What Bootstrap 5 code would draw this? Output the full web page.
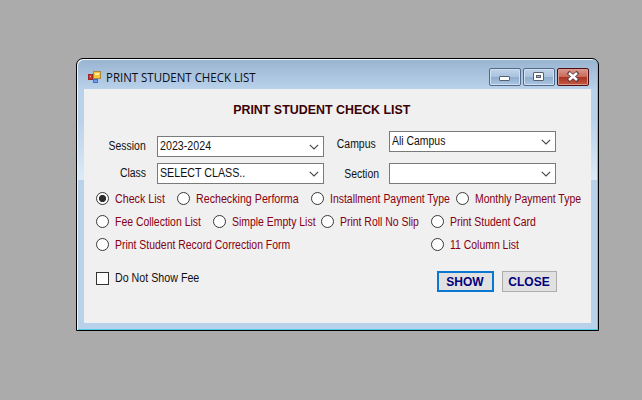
<!DOCTYPE html>
<html lang="en">
<head>
<meta charset="utf-8">
<title>PRINT STUDENT CHECK LIST</title>
<link href="https://cdn.jsdelivr.net/npm/bootstrap@5.3.0/dist/css/bootstrap.min.css" rel="stylesheet">
<style>
body{background:#ababab;font:12px/14px "Liberation Sans",Arial,sans-serif;color:#101010;height:400px;overflow:hidden}
.win{width:523px;height:273px;margin:58px 0 0 76px;border:1px solid #000;border-radius:7px 7px 0 0;
 background:linear-gradient(#99b4d1,#b9d1ea 30px,#b9d1ea 60px,#dcebf7 121px,#b9d1ea 121px);box-shadow:inset 1px 1px 0 #eef5fb,inset -1px -1px 0 #4fcfe4;padding:0 7px 7px}
.titlebar{height:30px;font-family:"Open Sans","Noto Sans",sans-serif;color:#0b0b14;padding:5px 2px 0 4px}
.sq{display:inline-block;white-space:nowrap;transform:scaleX(.87);transform-origin:0 50%}
.sq-r{transform-origin:100% 50%}
.sq-wide{transform:scaleX(.89)}
.sq-title{transform:scaleX(.955);margin:2px 0 0 4px}
.sq-head{transform:scaleX(.955);transform-origin:50% 50%}
.client{background:#f0f0f0;height:234px;padding:13px 0 0 12px}
.heading{font-size:13px;font-weight:700;color:#3a0004;line-height:15px;margin-left:-12px;padding-right:31px}
.caps{gap:2px}
.cap-btn{width:32px;height:18px;border:1px solid #52698a;border-radius:2px;background:linear-gradient(#c0d4ea,#aac3de 48%,#8eacce 50%,#a9c5e2);box-shadow:inset 0 0 0 1px #d0e0f0}
.cap-close{border-color:#4b1013;background:linear-gradient(#d99a8e,#c9695a 48%,#a93222 50%,#c45a40);box-shadow:inset 0 0 0 1px #dc9a90}
.fields{display:grid;grid-template-columns:61px 167px 65px 167px;margin-top:14px}
.names{padding-right:11px}
.name-campus{margin:6px 13px 0 0}
.name-section{margin:auto 10px 3px 0}
.pick{height:21px;border:1px solid #7a7a7a;background:#fff;padding:0 4px 0 1.5px}
.pick-up{padding-bottom:2px}
.pick svg{margin-top:2px}
.drop-a{margin-top:5px}
.drop-b{margin-top:6px}
.opts{display:grid;height:23px;color:#850010;align-items:center}
.opts-1{grid-template-columns:81px 134px 145px auto;margin-top:3px}
.opts-2{grid-template-columns:117px 108px 110px auto}
.opts-3{grid-template-columns:335px auto}
.opt{gap:5.5px}
.dot{width:13px;height:13px;border:1px solid #383838;border-radius:50%;background:#fff;flex:none}
.dot-on{background:radial-gradient(circle,#2c2c2c 3.2px,#fff 4px)}
.tick{width:13px;height:13px;border:1px solid #333;background:#fff;flex:none}
.foot{margin-top:15px;padding-right:34px}
.foot .opt{height:14px}
.act{height:21px;font-size:12px;font-weight:700;color:#00007c;background:#e1e1e1;border:1px solid #adadad;border-radius:0;padding:0;line-height:20px}
.act-show{width:57px;border:2px solid #0a78d0;line-height:18px;padding-right:1px}
.act-close{width:55px;padding-right:1px}
</style>
</head>
<body>
<main class="win">
 <header class="titlebar d-flex justify-content-between align-items-center">
  <div class="d-flex align-items-center">
   <svg width="14" height="14" viewBox="0 0 14 14"><rect x="5.5" y="1.5" width="7" height="7" fill="#f4c63c" stroke="#a98a3c"/><path d="M7 3h4v2H7z" fill="#ffe995"/><rect x=".5" y="4.5" width="4" height="5" fill="#cf3a30" stroke="#982a28"/><path d="M2 6h1v1H2z" fill="#ff9a8d"/><rect x="5.5" y="9.5" width="4" height="3" fill="#6fa0ee" stroke="#3f6fc4"/></svg>
   <span class="sq sq-title">PRINT STUDENT CHECK LIST</span>
  </div>
  <div class="caps d-flex">
    <span class="cap-btn d-flex align-items-center justify-content-center"><svg width="12" height="12"><rect x=".5" y="5.5" width="10" height="4" rx=".5" fill="#fff" stroke="#56606e"/></svg></span>
    <span class="cap-btn d-flex align-items-center justify-content-center"><svg width="12" height="12"><rect x=".5" y="1.5" width="10" height="8" rx=".5" fill="#fff" stroke="#56606e"/><rect x="3.5" y="4.5" width="4" height="2" fill="#9cb6d4" stroke="#56606e"/></svg></span>
    <span class="cap-btn cap-close d-flex align-items-center justify-content-center"><svg width="12" height="12"><path d="M2.5 2.5 9.5 8.5M9.5 2.5 2.5 8.5" stroke="#5a3c42" stroke-width="4" stroke-linecap="square"/><path d="M2 2 10 9M10 2 2 9" stroke="#fff" stroke-width="2.5"/></svg></span>
  </div>
 </header>
 <section class="client">
  <div class="heading text-center"><span class="sq sq-head">PRINT STUDENT CHECK LIST</span></div>
  <div class="fields">
   <div class="names d-flex flex-column align-items-end">
    <span class="sq sq-r mt-2">Session</span>
    <span class="sq sq-r mt-auto mb-1">Class</span>
   </div>
   <div>
    <div class="pick pick-up drop-a d-flex justify-content-between align-items-center"><span class="sq sq-wide">2023-2024</span><svg width="10" height="6"><path d="M.8.8 5 5 9.2.8" fill="none" stroke="#444" stroke-width="1.1"/></svg></div>
    <div class="pick pick-up drop-b d-flex justify-content-between align-items-center"><span class="sq sq-wide">SELECT CLASS..</span><svg width="10" height="6"><path d="M.8.8 5 5 9.2.8" fill="none" stroke="#444" stroke-width="1.1"/></svg></div>
   </div>
   <div class="d-flex flex-column align-items-end">
    <span class="sq sq-r name-campus">Campus</span>
    <span class="sq sq-r name-section">Section</span>
   </div>
   <div class="d-flex flex-column justify-content-between">
    <div class="pick pick-up d-flex justify-content-between align-items-center"><span class="sq">Ali Campus</span><svg width="10" height="6"><path d="M.8.8 5 5 9.2.8" fill="none" stroke="#444" stroke-width="1.1"/></svg></div>
    <div class="pick pick-up d-flex justify-content-end align-items-center"><svg width="10" height="6"><path d="M.8.8 5 5 9.2.8" fill="none" stroke="#444" stroke-width="1.1"/></svg></div>
   </div>
  </div>
  <div class="opts opts-1">
   <div class="opt d-flex align-items-center"><i class="dot dot-on"></i><span class="sq sq-wide">Check List</span></div>
   <div class="opt d-flex align-items-center"><i class="dot"></i><span class="sq sq-wide">Rechecking Performa</span></div>
   <div class="opt d-flex align-items-center"><i class="dot"></i><span class="sq">Installment Payment Type</span></div>
   <div class="opt d-flex align-items-center"><i class="dot"></i><span class="sq">Monthly Payment Type</span></div>
  </div>
  <div class="opts opts-2">
   <div class="opt d-flex align-items-center"><i class="dot"></i><span class="sq">Fee Collection List</span></div>
   <div class="opt d-flex align-items-center"><i class="dot"></i><span class="sq">Simple Empty List</span></div>
   <div class="opt d-flex align-items-center"><i class="dot"></i><span class="sq">Print Roll No Slip</span></div>
   <div class="opt d-flex align-items-center"><i class="dot"></i><span class="sq">Print Student Card</span></div>
  </div>
  <div class="opts opts-3">
   <div class="opt d-flex align-items-center"><i class="dot"></i><span class="sq">Print Student Record Correction Form</span></div>
   <div class="opt d-flex align-items-center"><i class="dot"></i><span class="sq">11 Column List</span></div>
  </div>
  <div class="foot d-flex">
   <div class="opt d-flex align-items-center me-auto"><i class="tick"></i><span class="sq sq-wide">Do Not Show Fee</span></div>
   <div class="d-flex gap-2"><button class="btn act act-show">SHOW</button><button class="btn act act-close">CLOSE</button></div>
  </div>
 </section>
</main>
<script src="https://cdn.jsdelivr.net/npm/bootstrap@5.3.0/dist/js/bootstrap.bundle.min.js"></script>
</body>
</html>
